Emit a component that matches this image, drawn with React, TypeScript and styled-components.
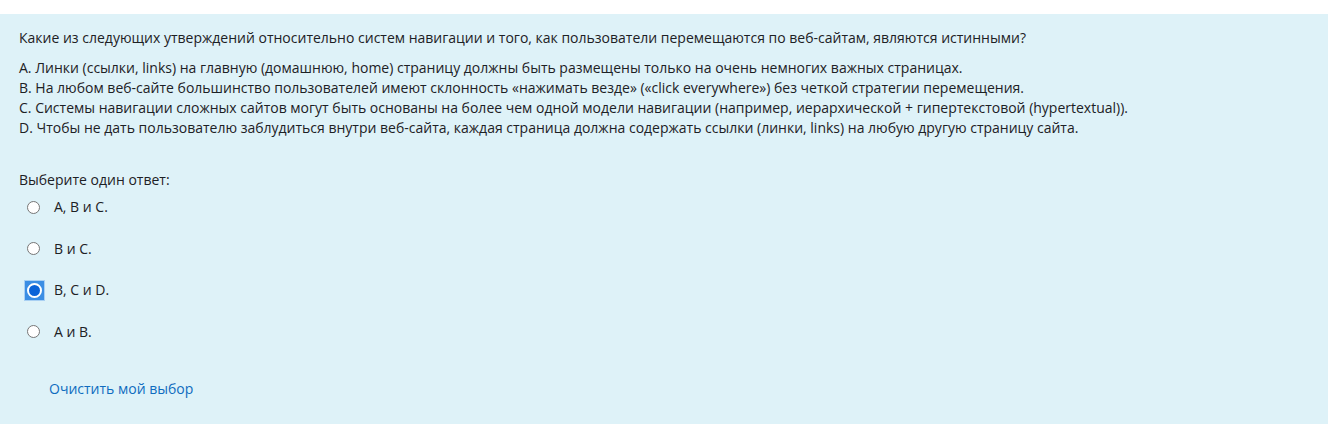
import React from "react";
import styled, { createGlobalStyle } from "styled-components";

const Global = createGlobalStyle`
  html, body { margin: 0; padding: 0; background: #ffffff; }
  body {
    font-family: "Open Sans", "Noto Sans", Arial, sans-serif;
    font-size: 14px;
    color: #1d2125;
  }
`;

const Page = styled.div`
  padding: 14px 4px 11px 0;
`;

const Panel = styled.section`
  background: #def2f8;
  padding: 14px 19px 25px 19px;
  box-sizing: border-box;
  height: 410px;
`;

const QText = styled.p`
  margin: 0 0 10px 0;
  line-height: 20px;
`;

const Statements = styled.div`
  display: flex;
  flex-direction: column;
`;

const Statement = styled.div`
  line-height: 20px;
`;

const Prompt = styled.div`
  margin-top: 32px;
  line-height: 20px;
`;

const Answers = styled.div`
  display: flex;
  flex-direction: column;
  gap: 21.6px;
  margin-top: 7px;
`;

const Option = styled.label`
  display: flex;
  align-items: center;
  height: 20px;
  line-height: 20px;
`;

const RadioBox = styled.span`
  width: 27px;
  height: 20px;
  display: flex;
  align-items: center;
  padding-left: 5px;
  margin-right: 8px;
  box-sizing: border-box;
`;

const Circle = styled.span`
  width: 13px;
  height: 13px;
  border-radius: 50%;
  border: 1px solid #767676;
  background: #ffffff;
  box-sizing: border-box;
  margin-left: 3px;
`;

const FocusSquare = styled.span`
  width: 21px;
  height: 21px;
  background: #3b8ee4;
  border: 1px solid #a9d0f3;
  box-sizing: border-box;
  display: flex;
  align-items: center;
  justify-content: center;
`;

const CheckedDot = styled.span`
  width: 15px;
  height: 15px;
  border-radius: 50%;
  background: #0a63d8;
  border: 2px solid #ffffff;
  box-sizing: border-box;
`;

const OptionText = styled.span``;

const ClearLink = styled.a`
  display: inline-block;
  margin-top: 37px;
  margin-left: 30px;
  color: #0f6cbf;
  text-decoration: none;
  line-height: 20px;
  cursor: pointer;
`;

const options = [
  { text: "А, В и С.", checked: false },
  { text: "В и С.", checked: false },
  { text: "В, С и D.", checked: true },
  { text: "А и В.", checked: false },
];

export default function App() {
  return (
    <Page>
      <Global />
      <Panel>
        <QText>
          Какие из следующих утверждений относительно систем навигации и того, как пользователи перемещаются по веб-сайтам, являются истинными?
        </QText>
        <Statements>
          <Statement>А. Линки (ссылки, links) на главную (домашнюю, home) страницу должны быть размещены только на очень немногих важных страницах.</Statement>
          <Statement>В. На любом веб-сайте большинство пользователей имеют склонность «нажимать везде» («click everywhere») без четкой стратегии перемещения.</Statement>
          <Statement>С. Системы навигации сложных сайтов могут быть основаны на более чем одной модели навигации (например, иерархической + гипертекстовой (hypertextual)).</Statement>
          <Statement>D. Чтобы не дать пользователю заблудиться внутри веб-сайта, каждая страница должна содержать ссылки (линки, links) на любую другую страницу сайта.</Statement>
        </Statements>
        <Prompt>Выберите один ответ:</Prompt>
        <Answers>
          {options.map((o) => (
            <Option key={o.text}>
              <RadioBox>
                {o.checked ? (
                  <FocusSquare>
                    <CheckedDot />
                  </FocusSquare>
                ) : (
                  <Circle />
                )}
              </RadioBox>
              <OptionText>{o.text}</OptionText>
            </Option>
          ))}
        </Answers>
        <ClearLink>Очистить мой выбор</ClearLink>
      </Panel>
    </Page>
  );
}
